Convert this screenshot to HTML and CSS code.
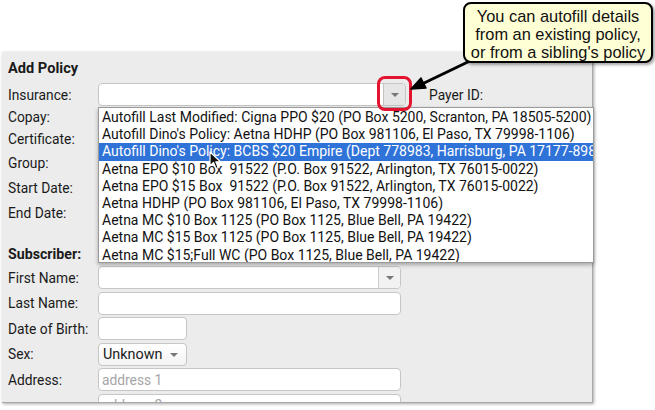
FILE: index.html
```html
<!DOCTYPE html>
<html>
<head>
<meta charset="utf-8">
<link rel="stylesheet" href="styles.css">
</head>
<body>
<div class="panel">
  <div class="title">Add Policy</div>
  <div class="row r-ins">
    <span class="lbl">Insurance:</span>
    <div class="field sel w-ins"><span class="txt"></span><span class="btn"><i class="caret"></i></span></div>
    <span class="lbl payer">Payer ID:</span>
  </div>
  <div class="row r-22"><span class="lbl">Copay:</span></div>
  <div class="row r-22"><span class="lbl">Certificate:</span></div>
  <div class="row r-26"><span class="lbl">Group:</span></div>
  <div class="row r-24"><span class="lbl">Start Date:</span></div>
  <div class="row r-26"><span class="lbl">End Date:</span></div>
  <div class="row r-sub"><span class="lbl bold">Subscriber:</span></div>
  <div class="stack">
    <div class="row r-f">
      <span class="lbl">First Name:</span>
      <div class="field sel w-full"><span class="txt"></span><span class="btn"><i class="caret"></i></span></div>
    </div>
    <div class="row r-f">
      <span class="lbl">Last Name:</span>
      <div class="field w-full"></div>
    </div>
    <div class="row r-f">
      <span class="lbl">Date of Birth:</span>
      <div class="field w-small"></div>
    </div>
    <div class="row r-f">
      <span class="lbl">Sex:</span>
      <div class="field plain w-small"><span class="txt val">Unknown</span><i class="caret"></i></div>
    </div>
    <div class="row r-f">
      <span class="lbl">Address:</span>
      <div class="field w-full"><span class="txt ph">address 1</span></div>
    </div>
    <div class="row r-f">
      <span class="lbl"></span>
      <div class="field w-full"><span class="txt ph">address 2</span></div>
    </div>
  </div>
</div>

<ul class="list">
  <li>Autofill Last Modified: Cigna PPO $20 (PO Box 5200, Scranton, PA 18505-5200)</li>
  <li>Autofill Dino's Policy: Aetna HDHP (PO Box 981106, El Paso, TX 79998-1106)</li>
  <li class="hl">Autofill Dino's Policy: BCBS $20 Empire (Dept 778983, Harrisburg, PA 17177-8983)</li>
  <li>Aetna EPO $10 Box&nbsp; 91522 (P.O. Box 91522, Arlington, TX 76015-0022)</li>
  <li>Aetna EPO $15 Box&nbsp; 91522 (P.O. Box 91522, Arlington, TX 76015-0022)</li>
  <li>Aetna HDHP (PO Box 981106, El Paso, TX 79998-1106)</li>
  <li>Aetna MC $10 Box 1125 (PO Box 1125, Blue Bell, PA 19422)</li>
  <li>Aetna MC $15 Box 1125 (PO Box 1125, Blue Bell, PA 19422)</li>
  <li>Aetna MC $15;Full WC (PO Box 1125, Blue Bell, PA 19422)</li>
</ul>

<svg class="cursor" width="14" height="20" viewBox="0 0 14 20">
  <path d="M1 1 L1 15 L4.5 11.5 L7 17.5 L9.2 16.6 L6.8 10.8 L11.5 10.8 Z" fill="#111" stroke="#fff" stroke-width="1.2" stroke-linejoin="round"/>
</svg>

<div class="ring"></div>

<svg class="arrow" width="655" height="410" viewBox="0 0 655 410">
  <line x1="472" y1="60" x2="422" y2="84" stroke="#000" stroke-width="3" stroke-linecap="round"/>
  <path d="M411 89 L421 78 L426 88 Z" fill="#000" stroke="#000" stroke-width="1.5" stroke-linejoin="round"/>
</svg>

<div class="callout">You can autofill details<br>from an existing policy,<br>or from a sibling's policy</div>
</body>
</html>
```

FILE: styles.css
```css
html, body {
  margin: 0;
  padding: 0;
  background: #ffffff;
  width: 655px;
  height: 410px;
  overflow: hidden;
  font-family: Roboto, "Liberation Sans", Arial, sans-serif;
  color: #1a1a1a;
}

.panel {
  margin: 52px 0 0 2px;
  width: 591px;
  height: 351px;
  background: #ececec;
  border-right: 1px solid #a8a8a8;
  border-bottom: 1px solid #a8a8a8;
  box-shadow: 1px 1px 3px rgba(0, 0, 0, 0.35);
  padding: 8px 0 0 6px;
  box-sizing: border-box;
  overflow: hidden;
  font-size: 13.8px;
}

.title {
  font-weight: bold;
  height: 16px;
  line-height: 16px;
  font-size: 14.6px;
}

.row {
  display: flex;
  align-items: center;
}

.lbl {
  width: 90px;
  flex: none;
  line-height: 16px;
  white-space: nowrap;
}

.bold { font-weight: bold; font-size: 14.2px; }

.r-ins { margin-top: 7px; height: 23px; }
.r-22 { height: 22px; }
.r-24 { height: 24px; }
.r-26 { height: 26px; }
.r-sub { height: 40px; align-items: flex-end; padding-bottom: 4px; box-sizing: border-box; }

.stack {
  display: flex;
  flex-direction: column;
  gap: 2.6px;
}
.r-f { height: 23px; }

.field {
  height: 23px;
  box-sizing: border-box;
  background: #fff;
  border: 1px solid #c6c6c6;
  border-radius: 4px;
  display: flex;
  align-items: center;
  overflow: hidden;
  flex: none;
}
.w-ins { width: 308px; }
.w-full { width: 303px; }
.w-small { width: 89px; }

.txt { flex: 1; padding-left: 3px; white-space: nowrap; }
.ph { color: #a6a6a6; }
.val { color: #1a1a1a; font-size: 14.4px; padding-left: 4px; }

.sel .btn {
  width: 21px;
  height: 100%;
  border-left: 1px solid #cfcfcf;
  background: #f2f2f2;
  display: flex;
  align-items: center;
  justify-content: center;
}
.w-ins .btn { background: #e6e6e6; border-left-color: #c2c2c2; }

.caret {
  display: block;
  width: 0;
  height: 0;
  border-left: 4px solid transparent;
  border-right: 4px solid transparent;
  border-top: 4px solid #777;
}

.plain {
  background: linear-gradient(#ffffff, #f3f3f3);
}
.plain .caret { margin-right: 8px; margin-top: 1px; }

.payer { margin-left: 23px; width: auto; }

.list {
  position: absolute;
  left: 98px;
  top: 107px;
  width: 496px;
  height: 156px;
  margin: 0;
  padding: 1px 0 0 0;
  box-sizing: border-box;
  list-style: none;
  background: #fff;
  border: 1px solid #9a9a9a;
  box-shadow: 0 2px 4px rgba(0, 0, 0, 0.3);
  font-size: 14px;
  color: #111;
  overflow: hidden;
}
.list li {
  height: 17.2px;
  line-height: 17.2px;
  padding-left: 3px;
  white-space: nowrap;
  overflow: hidden;
}
.list li.hl {
  background: #2f73d8;
  color: #fff;
}

.cursor {
  position: absolute;
  left: 209px;
  top: 151px;
}

.ring {
  position: absolute;
  left: 377px;
  top: 76px;
  width: 35px;
  height: 35px;
  box-sizing: border-box;
  border: 3px solid #e4142e;
  border-radius: 8px;
}

.arrow {
  position: absolute;
  left: 0;
  top: 0;
}

.callout {
  position: absolute;
  left: 463px;
  top: 2px;
  width: 190px;
  height: 61px;
  box-sizing: border-box;
  background: #ffffd6;
  border: 2.5px solid #000;
  border-radius: 8px;
  box-shadow: 2px 2px 3px rgba(0, 0, 0, 0.35);
  font-family: "Liberation Sans", Arial, sans-serif;
  font-size: 16.4px;
  line-height: 18px;
  text-align: center;
  padding-top: 3px;
  color: #111;
  white-space: nowrap;
}
```
